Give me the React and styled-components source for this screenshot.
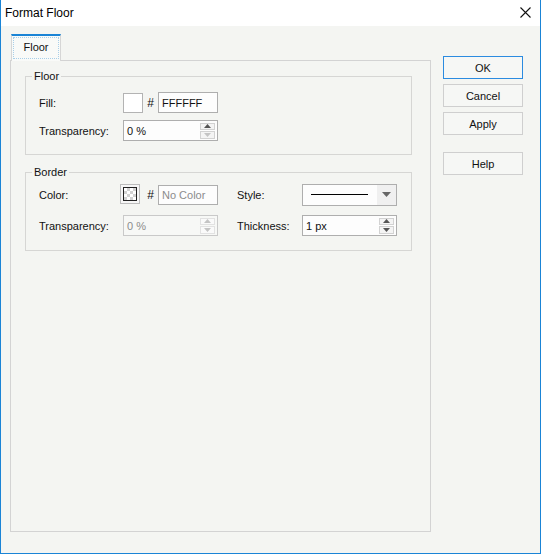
import React from "react";
import styled, { createGlobalStyle } from "styled-components";

const Global = createGlobalStyle`
  html, body { margin: 0; padding: 0; background: #f4f5f2; }
  * { box-sizing: border-box; }
  body { font-family: "Liberation Sans", Arial, sans-serif; font-size: 11px; color: #111; }
`;

const Window = styled.div`
  width: 541px;
  height: 554px;
  display: flex;
  flex-direction: column;
  background: #f4f5f2;
  border: 1px solid #1a84d6;
  border-top: none;
`;

const TitleBar = styled.div`
  height: 26px;
  flex: none;
  background: #fff;
  display: flex;
  align-items: center;
  justify-content: space-between;
  padding: 0 9px 1px 4px;
  font-size: 12px;
  color: #000;
`;

const CloseBtn = styled.div`
  width: 12px;
  height: 12px;
  display: flex;
  align-items: center;
  justify-content: center;
`;

const Body = styled.div`
  flex: 1;
  display: flex;
  padding: 8px 0 0 9px;
`;

const LeftCol = styled.div`
  width: 421px;
  display: flex;
  flex-direction: column;
`;

const TabStrip = styled.div`
  height: 26px;
  display: flex;
  padding-left: 1px;
  position: relative;
  z-index: 1;
`;

const Tab = styled.div`
  width: 50px;
  height: 27px;
  background: #f9faf8;
  border-top: 2px solid #1a84d6;
  border-left: 1px solid #d6d6d6;
  border-right: 1px solid #d6d6d6;
  padding: 1px 1px 2px 1px;
`;

const TabFocus = styled.div`
  height: 100%;
  border: 1px dotted #a9cfe9;
  display: flex;
  align-items: center;
  justify-content: center;
  padding-bottom: 2px;
  font-size: 11px;
`;

const Panel = styled.div`
  height: 472px;
  border: 1px solid #d3d3d3;
  padding: 9px 18px 0 14px;
  display: flex;
  flex-direction: column;
  gap: 11px;
`;

const Group = styled.fieldset`
  margin: 0;
  padding: 0;
  border: 1px solid #d6d6d4;
  height: ${(p) => p.$h}px;
  min-width: 0;
`;

const Legend = styled.legend`
  margin-left: 6px;
  padding: 0 2px;
  font-size: 11px;
  line-height: 13px;
`;

const GroupBody = styled.div`
  padding: ${(p) => p.$pt}px 0 0 13px;
  display: flex;
  flex-direction: column;
  gap: ${(p) => p.$gap}px;
`;

const Row = styled.div`
  display: flex;
  align-items: center;
  height: ${(p) => p.$h || 21}px;
`;

const Label = styled.div`
  width: ${(p) => p.$w}px;
  flex: none;
`;

const ColorControl = styled.div`
  width: 95px;
  display: flex;
  align-items: center;
`;

const Swatch = styled.div`
  width: 20px;
  height: 20px;
  background: #fff;
  border: 1px solid #b3b3b3;
`;

const CheckSwatch = styled.div`
  width: 20px;
  height: 20px;
  margin-left: -3px;
  margin-top: -1px;
  border: 1px solid #bcbcbc;
  padding: 2px;
  background: #f6f6f6;
`;

const CheckInner = styled.div`
  width: 100%;
  height: 100%;
  border: 1px solid #222;
  background: repeating-conic-gradient(#d2d2d2 0 25%, #ffffff 0 50%) 0 0 / 6px 6px;
`;

const Hash = styled.div`
  flex: 1;
  text-align: center;
  padding-left: ${(p) => (p.$shift ? 3 : 0)}px;
  font-size: 12px;
`;

const TextBox = styled.div`
  width: ${(p) => p.$w}px;
  height: ${(p) => p.$h || 21}px;
  border: 1px solid ${(p) => (p.$disabled ? "#c9c9c9" : "#aeaeae")};
  background: ${(p) => (p.$disabled ? "#f7f8f6" : "#fdfdfd")};
  color: ${(p) => (p.$muted || p.$disabled ? "#8c8c8c" : "#111")};
  display: flex;
  align-items: center;
  padding: 0 2px 0 3px;
  font-size: 11px;
`;

const Value = styled.div`
  flex: 1;
`;

const Spinner = styled.div`
  width: 15px;
  height: 16px;
  display: flex;
  flex-direction: column;
  gap: 1px;
`;

const SpinBtn = styled.div`
  flex: 1;
  border: 1px solid ${(p) => (p.$off ? "#e2e2e2" : "#d2d2d2")};
  background: ${(p) => (p.$off ? "#fafafa" : "#f4f4f4")};
  display: flex;
  align-items: center;
  justify-content: center;
`;

const Arrow = ({ up, color }) => (
  <svg width="7" height="4" viewBox="0 0 7 4">
    <path d={up ? "M0 4 L3.5 0 L7 4 Z" : "M0 0 L3.5 4 L7 0 Z"} fill={color} />
  </svg>
);

const Gap = styled.div`
  width: ${(p) => p.$w}px;
  flex: none;
`;

const Select = styled.div`
  width: 95px;
  height: 22px;
  border: 1px solid #aeaeae;
  background: #fdfdfd;
  display: flex;
  align-items: stretch;
`;

const SelectLine = styled.div`
  flex: 1;
  display: flex;
  align-items: center;
  padding: 0 9px 0 8px;
`;

const Line = styled.div`
  height: 1px;
  width: 100%;
  background: #000;
`;

const SelectArrow = styled.div`
  width: 19px;
  background: #f0f0f0;
  display: flex;
  align-items: center;
  justify-content: center;
`;

const RightCol = styled.div`
  margin: 22px 0 0 12px;
  display: flex;
  flex-direction: column;
  gap: 5px;
`;

const Button = styled.div`
  width: 80px;
  height: 23px;
  border: 1px solid ${(p) => (p.$primary ? "#2b8be0" : "#cfcfcf")};
  background: #f6f7f5;
  display: flex;
  align-items: center;
  justify-content: center;
  font-size: 11px;
  margin-top: ${(p) => p.$mt || 0}px;
`;

const SpinBox = ({ value, disabled, w, downOff }) => (
  <TextBox $w={w} $disabled={disabled}>
    <Value>{value}</Value>
    <Spinner>
      <SpinBtn $off={disabled}>
        <Arrow up color={disabled ? "#c4c4c4" : "#555"} />
      </SpinBtn>
      <SpinBtn $off={disabled}>
        <Arrow color={disabled || downOff ? "#c4c4c4" : "#555"} />
      </SpinBtn>
    </Spinner>
  </TextBox>
);

export default function App() {
  return (
    <>
      <Global />
      <Window>
        <TitleBar>
          <span>Format Floor</span>
          <CloseBtn>
            <svg width="11" height="11" viewBox="0 0 11 11">
              <path d="M0.5 0.5 L10.5 10.5 M10.5 0.5 L0.5 10.5" stroke="#111" strokeWidth="1.1" />
            </svg>
          </CloseBtn>
        </TitleBar>
        <Body>
          <LeftCol>
            <TabStrip>
              <Tab>
                <TabFocus>Floor</TabFocus>
              </Tab>
            </TabStrip>
            <Panel>
              <Group $h={85}>
                <Legend>Floor</Legend>
                <GroupBody $pt={9} $gap={7}>
                  <Row>
                    <Label $w={84}>Fill:</Label>
                    <ColorControl>
                      <Swatch />
                      <Hash>#</Hash>
                      <TextBox $w={60}>FFFFFF</TextBox>
                    </ColorControl>
                  </Row>
                  <Row>
                    <Label $w={84}>Transparency:</Label>
                    <SpinBox value="0 %" w={95} downOff />
                  </Row>
                </GroupBody>
              </Group>
              <Group $h={85}>
                <Legend>Border</Legend>
                <GroupBody $pt={4} $gap={9}>
                  <Row $h={23}>
                    <Label $w={84}>Color:</Label>
                    <ColorControl>
                      <CheckSwatch>
                        <CheckInner />
                      </CheckSwatch>
                      <Hash $shift>#</Hash>
                      <TextBox $w={60} $h={20} $muted>No Color</TextBox>
                    </ColorControl>
                    <Gap $w={19} />
                    <Label $w={65}>Style:</Label>
                    <Select>
                      <SelectLine>
                        <Line />
                      </SelectLine>
                      <SelectArrow>
                        <svg width="9" height="5" viewBox="0 0 9 5">
                          <path d="M0 0 L4.5 5 L9 0 Z" fill="#666" />
                        </svg>
                      </SelectArrow>
                    </Select>
                  </Row>
                  <Row>
                    <Label $w={84}>Transparency:</Label>
                    <SpinBox value="0 %" w={95} disabled />
                    <Gap $w={19} />
                    <Label $w={65}>Thickness:</Label>
                    <SpinBox value="1 px" w={95} />
                  </Row>
                </GroupBody>
              </Group>
            </Panel>
          </LeftCol>
          <RightCol>
            <Button $primary>OK</Button>
            <Button>Cancel</Button>
            <Button>Apply</Button>
            <Button $mt={12}>Help</Button>
          </RightCol>
        </Body>
      </Window>
    </>
  );
}
